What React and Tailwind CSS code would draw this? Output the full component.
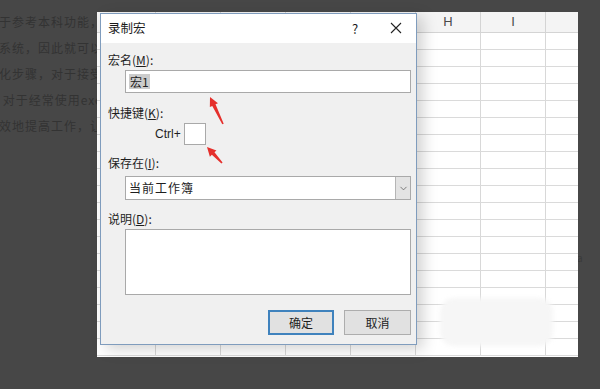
import React from 'react'
import { ChevronDown } from 'lucide-react'

const font = { fontFamily: '"Microsoft YaHei", "Noto Sans CJK SC", "Liberation Sans", sans-serif' }

const articleLines = [
    "于参考本科功能，",
    "系统，因此就可以",
    "化步骤，对于接受",
    " 对于经常使用exc",
    "效地提高工作，让",
]

function Label({ text, hot, rest }) {
    return (
        <div className="h-[16px] leading-[16px] text-[12px] text-[#1e1e1e]">
            {text}(<span className="underline">{hot}</span>){rest}:
        </div>
    )
}

function Sheet() {
    const rows = Array.from({ length: 19 })
    const cols = ["", "", "", "", "", "H", "I", ""]
    return (
        <div className="absolute left-[97px] top-[12px] w-[481px] h-[345px] bg-white overflow-hidden">
            <div className="flex h-[21px] bg-[#f4f4f4] border-b border-[#d4d4d4]">
                {cols.map((c, i) => (
                    <div
                        key={i}
                        className={`${i === 0 ? 'w-[59px]' : 'w-[65px]'} shrink-0 border-r border-[#d4d4d4] flex items-center justify-center text-[13px] text-[#4a4a4a]`}
                        style={{ fontFamily: '"Liberation Sans", sans-serif' }}
                    >
                        {c}
                    </div>
                ))}
            </div>
            {rows.map((_, r) => (
                <div key={r} className="flex h-[17px] border-b border-[#dadada]">
                    {cols.map((c, i) => (
                        <div key={i} className={`${i === 0 ? 'w-[59px]' : 'w-[65px]'} shrink-0 border-r border-[#d8d8d8]`} />
                    ))}
                </div>
            ))}
        </div>
    )
}

function Arrow({ x1, y1, x2, y2 }) {
    // tail (x1,y1) -> tip (x2,y2)
    const dx = x2 - x1, dy = y2 - y1
    const len = Math.hypot(dx, dy)
    const ux = dx / len, uy = dy / len
    const px = -uy, py = ux
    const hb = 9, hw = 4.5
    const bx = x2 - ux * hb, by = y2 - uy * hb
    const pts = [
        [x1 + px * 0.8, y1 + py * 0.8],
        [bx + px * 1.8, by + py * 1.8],
        [bx + px * hw, by + py * hw],
        [x2, y2],
        [bx - px * hw, by - py * hw],
        [bx - px * 1.8, by - py * 1.8],
        [x1 - px * 0.8, y1 - py * 0.8],
    ]
    return <polygon points={pts.map(p => p.join(',')).join(' ')} fill="#e5302c" />
}

export default function App() {
    return (
        <div className="relative w-[600px] h-[389px] bg-[#474747] overflow-hidden" style={font}>
            {/* dimmed article text behind */}
            <div className="pt-[14px] flex flex-col gap-[10px] text-[12px] text-[#333333] leading-[16px] whitespace-pre">
                {articleLines.map((l, i) => (
                    <div key={i} className="-ml-[1px] tracking-[1px]">{l}</div>
                ))}
            </div>
            <div className="absolute left-[577px] top-[250px] text-[10px] text-[#3a3a3a]">a</div>

            <Sheet />

            {/* watermark smudge */}
            <div className="absolute left-[440px] top-[298px] w-[113px] h-[48px] rounded-[14px] bg-[#f6f6f6] blur-[2px]" />

            {/* dialog */}
            <div className="absolute left-[100px] top-[13px] w-[317px] h-[332px] bg-[#f0f0f0] border border-[#7f9cbd] shadow-[6px_4px_14px_rgba(0,0,0,0.18)] flex flex-col">
                <div className="h-[29px] bg-white flex items-center pl-[7px] pr-[14px] text-[12.5px] text-[#1a1a1a]">
                    <span className="flex-1">录制宏</span>
                    <span className="w-[10px] text-center text-[13px] mr-[30px]">?</span>
                    <svg width="12" height="12" viewBox="0 0 12 12" className="mb-[1px]">
                        <path d="M1 1 L11 11 M11 1 L1 11" stroke="#222" strokeWidth="1.1" />
                    </svg>
                </div>
                <div className="flex flex-col pl-[7px] pr-[5px] pt-[9px]">
                    <Label text="宏名" hot="M" />
                    <div className="ml-[17px] mt-[2px] h-[23px] bg-white border border-[#a9a9a9] flex items-center pl-[3px]">
                        <span className="bg-[#cccccc] text-[12px] leading-[15px] px-[1px] text-[#222]">宏1</span>
                    </div>

                    <div className="mt-[12px]">
                        <Label text="快捷键" hot="K" />
                    </div>
                    <div className="mt-[2px] flex items-center">
                        <span className="ml-[47px] w-[29px] text-[12px] text-[#1e1e1e]" style={{ fontFamily: '"Liberation Sans", sans-serif' }}>Ctrl+</span>
                        <div className="w-[22px] h-[22px] bg-white border border-[#a9a9a9]" />
                    </div>

                    <div className="mt-[10px]">
                        <Label text="保存在" hot="I" />
                    </div>
                    <div className="ml-[17px] mt-[5px] h-[24px] bg-white border border-[#a9a9a9] flex items-center">
                        <span className="flex-1 pl-[3px] text-[12px] text-[#1e1e1e] tracking-[1px]">当前工作簿</span>
                        <div className="w-[15px] h-full bg-[#e3e3e3] border-l border-[#b5b5b5] flex items-center justify-center">
                            <ChevronDown size={11} strokeWidth={1.6} color="#555" />
                        </div>
                    </div>

                    <div className="mt-[11px]">
                        <Label text="说明" hot="D" />
                    </div>
                    <div className="ml-[17px] mt-[2px] h-[66px] bg-white border border-[#a9a9a9]" />

                    <div className="mt-[15px] flex justify-end gap-[10px]">
                        <button className="w-[66px] h-[25px] bg-[#e1e1e1] border-2 border-[#3f82bd] text-[12px] text-[#1e1e1e]">确定</button>
                        <button className="w-[67px] h-[25px] bg-[#e1e1e1] border border-[#adadad] text-[12px] text-[#1e1e1e]">取消</button>
                    </div>
                </div>
            </div>

            {/* annotation arrows */}
            <svg className="absolute left-0 top-0" width="600" height="389">
                <Arrow x1={223} y1={124} x2={210} y2={97} />
                <Arrow x1={222} y1={163} x2={207} y2={147} />
            </svg>
        </div>
    )
}
